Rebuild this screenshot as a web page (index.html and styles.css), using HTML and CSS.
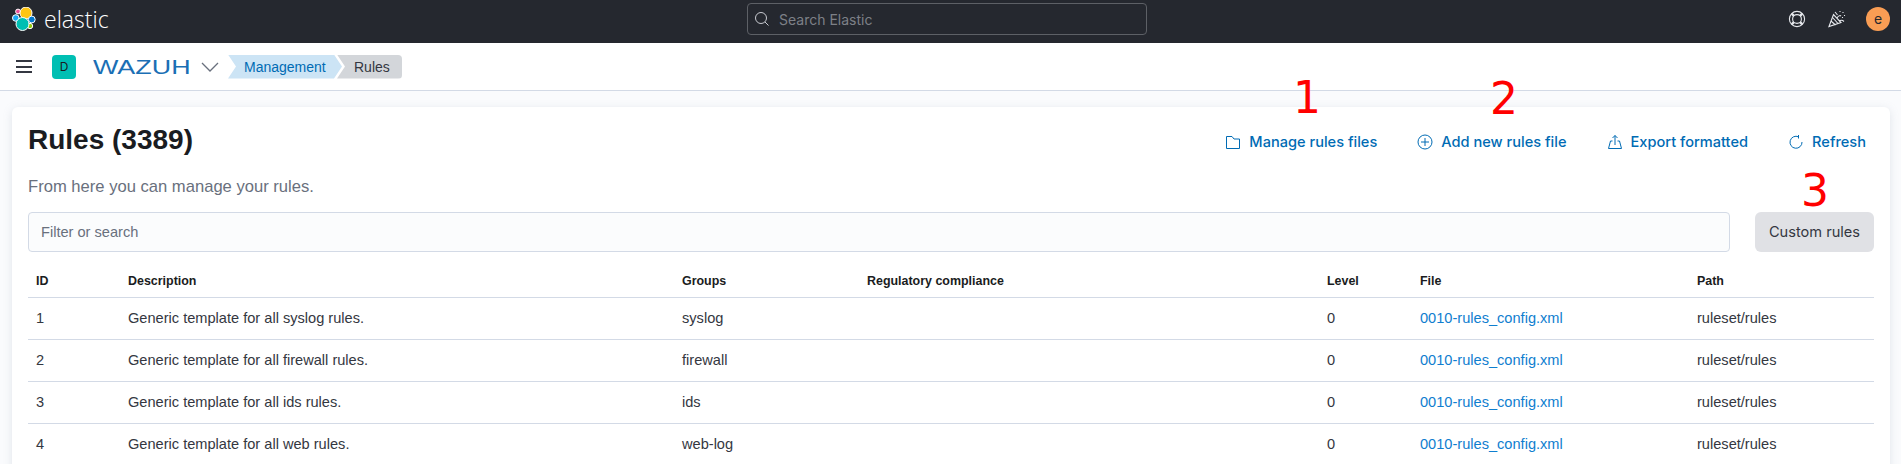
FILE: index.html
```html
<!DOCTYPE html>
<html lang="en">
<head>
  <meta charset="UTF-8">
  <title>Rules - Wazuh</title>
  <link rel="stylesheet" href="styles.css">
</head>
<body>
  <!-- Top dark bar -->
  <header class="topbar">
    <div class="brand">
      <svg class="brand-logo" width="24" height="24" viewBox="0 0 24 24" stroke="#fff" stroke-width="1">
        <circle cx="6" cy="4.500" r="2.400" fill="#f04e98"/>
        <circle cx="14" cy="6" r="6" fill="#fec514"/>
        <circle cx="3.800" cy="11" r="3.300" fill="#1ba9f5"/>
        <circle cx="19.800" cy="12.500" r="3.400" fill="#0077cc"/>
        <circle cx="18" cy="19" r="2.700" fill="#93c90e"/>
        <circle cx="10.500" cy="17" r="6.500" fill="#00bfb3"/>
      </svg>
      <span class="brand-name">elastic</span>
    </div>
    <div class="global-search">
      <svg width="14" height="14" viewBox="0 0 14 14" fill="none" stroke="#c8cad0" stroke-width="1">
        <circle cx="6" cy="6" r="5.500"/>
        <path d="M10 10l3.500 3.500"/>
      </svg>
      <span>Search Elastic</span>
    </div>
    <div class="top-actions">
      <svg width="18" height="18" viewBox="0 0 18 18" fill="none" stroke="#e6e8ec" stroke-width="1.100">
        <circle cx="9" cy="9" r="7.600"/>
        <circle cx="9" cy="9" r="4.400"/>
        <path d="M3.700 3.700l2.200 2.200M14.300 3.700l-2.200 2.200M3.700 14.300l2.200-2.200M14.300 14.300l-2.200-2.200" stroke-width="2.400"/>
      </svg>
      <svg width="18" height="18" viewBox="0 0 18 18" fill="none" stroke="#e6e8ec" stroke-width="1.100">
        <path d="M1 16.500l4.500-12 7.500 8z"/>
        <path d="M3 11l4.500 4M4.500 7.500l5.500 6M7 2l2.500 3M9 8c1-2 3-3 4-2M11 11c1.500-1 3.500-1 5 .5M12 1v1M15 2v1M16.500 5v1M14.500 7v1"/>
      </svg>
      <div class="user-avatar">e</div>
    </div>
  </header>

  <!-- Breadcrumb bar -->
  <nav class="subbar">
    <div class="hamburger"><i></i><i></i><i></i></div>
    <div class="space-badge">D</div>
    <div class="wazuh-logo"><span>WAZUH</span></div>
    <svg class="wazuh-chevron" width="18" height="10" viewBox="0 0 18 10" fill="none" stroke="#69707d" stroke-width="1.300">
      <path d="M1 1l8 8 8-8"/>
    </svg>
    <div class="crumbs">
      <a class="crumb crumb-first">Management</a>
      <a class="crumb crumb-last">Rules</a>
    </div>
  </nav>

  <!-- Rules panel -->
  <main class="panel">
    <div class="panel-head">
      <h1>Rules (3389)</h1>
      <div class="actions">
        <a class="action">
          <svg width="16" height="16" viewBox="0 0 16 16" fill="none" stroke="#006bb4"><path d="M1.500 14.500v-12h5.500l2 2.500h5.500v9.500z"/></svg>
          Manage rules files
        </a>
        <a class="action">
          <svg width="16" height="16" viewBox="0 0 16 16" fill="none" stroke="#006bb4"><circle cx="8" cy="8" r="7"/><path d="M8 4v8M4 8h8"/></svg>
          Add new rules file
        </a>
        <a class="action">
          <svg width="16" height="16" viewBox="0 0 16 16" fill="none" stroke="#006bb4"><path d="M5.500 7H3.500l-2 7.500h13l-2-7.500h-2M8 11V1.500M5.500 4L8 1.500 10.500 4"/></svg>
          Export formatted
        </a>
        <a class="action">
          <svg width="16" height="16" viewBox="0 0 16 16" fill="none" stroke="#006bb4"><path d="M10.500 2.800A6 6 0 1 0 14 8M10.500 1v3.500"/></svg>
          Refresh
        </a>
      </div>
    </div>
    <p class="subtitle">From here you can manage your rules.</p>
    <div class="filter-row">
      <input class="filter" type="text" placeholder="Filter or search">
      <button class="custom-btn">Custom rules</button>
    </div>
    <table class="rules">
      <colgroup>
        <col class="c-id"><col class="c-desc"><col class="c-groups"><col class="c-reg"><col class="c-level"><col class="c-file"><col class="c-path">
      </colgroup>
      <thead>
        <tr><th>ID</th><th>Description</th><th>Groups</th><th>Regulatory compliance</th><th>Level</th><th>File</th><th>Path</th></tr>
      </thead>
      <tbody>
        <tr><td>1</td><td>Generic template for all syslog rules.</td><td>syslog</td><td></td><td>0</td><td><a>0010-rules_config.xml</a></td><td>ruleset/rules</td></tr>
        <tr><td>2</td><td>Generic template for all firewall rules.</td><td>firewall</td><td></td><td>0</td><td><a>0010-rules_config.xml</a></td><td>ruleset/rules</td></tr>
        <tr><td>3</td><td>Generic template for all ids rules.</td><td>ids</td><td></td><td>0</td><td><a>0010-rules_config.xml</a></td><td>ruleset/rules</td></tr>
        <tr><td>4</td><td>Generic template for all web rules.</td><td>web-log</td><td></td><td>0</td><td><a>0010-rules_config.xml</a></td><td>ruleset/rules</td></tr>
      </tbody>
    </table>
  </main>

  <!-- Hand-added numbers on top of the screenshot -->
  <span class="mark mark-1">1</span>
  <span class="mark mark-2">2</span>
  <span class="mark mark-3">3</span>
</body>
</html>
```

FILE: styles.css
```css
/* General */
html, body {
  height: 100%;
}

body {
  margin: 0;
  overflow: hidden;
  position: relative;
  background: #fafbfd;
  color: #343741;
  font-family: 'Liberation Sans', Arial, sans-serif;
  font-size: 14.600px;
}

/* Top dark bar */
.topbar {
  height: 43px;
  box-sizing: border-box;
  padding: 0 11px 5px 12px;
  display: flex;
  align-items: center;
  background: #25282f;
}

.brand {
  width: 735px;
  display: flex;
  align-items: center;
  gap: 8px;
}

.brand-name {
  font-family: 'Open Sans', sans-serif;
  font-weight: 300;
  font-size: 23px;
  color: #fff;
}

.global-search {
  width: 400px;
  height: 32px;
  box-sizing: border-box;
  padding: 0 7px;
  display: flex;
  align-items: center;
  gap: 10px;
  border: 1px solid #5d6066;
  border-radius: 4px;
  font-family: Inter, sans-serif;
  font-size: 14px;
  color: #7d8087;
}

.top-actions {
  margin-left: auto;
  display: flex;
  align-items: center;
  gap: 22px;
}

.user-avatar {
  width: 24px;
  height: 24px;
  margin-left: -2px;
  border-radius: 50%;
  background: #f99d54;
  color: #25282f;
  font-family: Inter, sans-serif;
  font-size: 14px;
  line-height: 24px;
  text-align: center;
}

/* Breadcrumb bar */
.subbar {
  height: 48px;
  box-sizing: border-box;
  padding-left: 16px;
  display: flex;
  align-items: center;
  background: #fff;
  border-bottom: 1px solid #d3dae6;
}

.hamburger {
  width: 16px;
  display: flex;
  flex-direction: column;
  gap: 3.500px;
}

.hamburger i {
  height: 2px;
  background: #343741;
}

.space-badge {
  width: 24px;
  height: 24px;
  margin-left: 20px;
  border-radius: 4px;
  background: #00bfb3;
  color: #1a1c21;
  font-family: Inter, sans-serif;
  font-size: 12px;
  line-height: 24px;
  text-align: center;
}

.wazuh-logo {
  width: 98px;
  margin-left: 17px;
  color: #1b6fb5;
  font-size: 21px;
  line-height: 24px;
}

.wazuh-logo span {
  display: inline-block;
  transform: scaleX(1.280);
  transform-origin: left center;
}

.wazuh-chevron {
  margin-left: 10px;
}

.crumbs {
  margin-left: 9px;
  display: flex;
}

.crumb {
  height: 24px;
  box-sizing: border-box;
  display: flex;
  align-items: center;
  font-size: 14px;
}

.crumb-first {
  width: 114px;
  padding-left: 16px;
  background: #cce4f5;
  color: #006bb4;
  clip-path: polygon(0 0, 106px 0, 100% 50%, 106px 100%, 0 100%, 8px 50%);
}

.crumb-last {
  width: 65px;
  margin-left: -5px;
  padding-left: 17px;
  border-radius: 0 4px 4px 0;
  background: #d3d6da;
  color: #343741;
  clip-path: polygon(0 0, 100% 0, 100% 100%, 0 100%, 8px 50%);
}

/* Rules panel */
.panel {
  margin: 16px 11px 0 12px;
  padding: 16px;
  background: #fff;
  border-radius: 6px;
  box-shadow: 0 2px 8px rgba(152, 162, 179, 0.25);
}

.panel-head {
  display: flex;
  justify-content: space-between;
}

h1 {
  margin: -1px 0 0;
  font-size: 28px;
  line-height: 36px;
  font-weight: bold;
  color: #1a1c21;
}

.actions {
  display: flex;
  padding: 9px 8px 0 0;
  gap: 40px;
}

.action {
  display: flex;
  align-items: center;
  gap: 8px;
  height: 20px;
  font-family: Inter, sans-serif;
  font-size: 14.600px;
  font-weight: 500;
  color: #006bb4;
}

.subtitle {
  margin: 17px 0 0;
  font-size: 16.600px;
  line-height: 24px;
  color: #69707d;
}

.filter-row {
  margin-top: 13px;
  display: flex;
  gap: 25px;
}

.filter {
  flex: 1;
  height: 40px;
  box-sizing: border-box;
  padding: 0 12px;
  background: #fbfcfd;
  border: 1px solid #d3dae6;
  border-radius: 4px;
  font-family: 'Liberation Sans', Arial, sans-serif;
  font-size: 14.600px;
  outline: none;
}

.filter::placeholder {
  color: #69707d;
}

.custom-btn {
  width: 119px;
  height: 40px;
  padding: 0;
  background: #e0e1e5;
  border: none;
  border-radius: 6px;
  font-family: Inter, sans-serif;
  font-size: 14.600px;
  color: #343741;
}

/* Table */
.rules {
  width: 100%;
  margin-top: 12px;
  border-collapse: collapse;
  table-layout: fixed;
}

.c-id { width: 92px; }
.c-desc { width: 554px; }
.c-groups { width: 185px; }
.c-reg { width: 460px; }
.c-level { width: 93px; }
.c-file { width: 277px; }
.c-path { width: 185px; }

.rules th {
  height: 33px;
  padding: 0 8px;
  text-align: left;
  font-size: 12.450px;
  font-weight: bold;
  color: #1a1c21;
  border-bottom: 1px solid #d3dae6;
}

.rules td {
  height: 40px;
  padding: 0 8px 1px;
  border-bottom: 1px solid #d3dae6;
}

.rules a {
  color: #0f7ecf;
}

/* Red numbers */
.mark {
  position: absolute;
  font-family: 'DejaVu Sans', sans-serif;
  font-size: 44px;
  line-height: 44px;
  color: #f00;
}

.mark-1 { left: 1293px; top: 76px; }
.mark-2 { left: 1490px; top: 77px; }
.mark-3 { left: 1801px; top: 169px; }
```
